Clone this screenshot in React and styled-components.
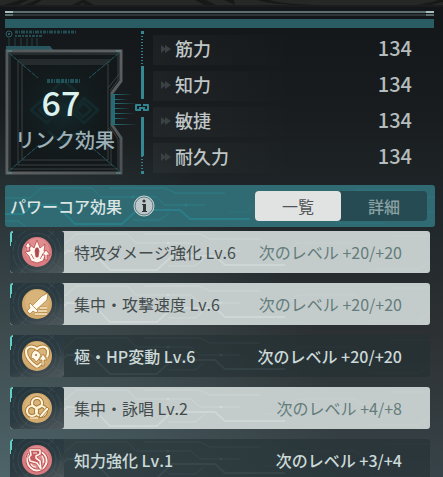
import { useState } from "react";
import styled, { createGlobalStyle } from "styled-components";

const GlobalStyle = createGlobalStyle`
  * {
    box-sizing: border-box;
  }

  body {
    margin: 0;
    background-color: #15181a;
    font-family: "Noto Sans CJK JP", "Noto Sans", sans-serif;
    font-kerning: none;
  }

  button {
    font-family: inherit;
    border: none;
    padding: 0;
    cursor: pointer;
  }
`;

const Page = styled.main`
  min-height: 100vh;
  overflow: hidden;
  background:
    radial-gradient(ellipse at 0% 100%, rgba(92, 122, 126, 0.6), transparent 55%),
    linear-gradient(to bottom, #131618 0%, #191d1f 25%, #20272a 45%, #2d3133 70%, #38444a 100%);
`;

const TopStrip = styled.div`
  height: 7px;
  background-color: #262727;
  border-bottom: 2px solid #1c1c1c;
  overflow: hidden;

  svg {
    display: block;
  }
`;

const Panel = styled.section`
  padding: 4px 8px 0 5px;
`;

const Rule = styled.div`
  height: 2px;
  margin-right: 1px;
  margin-bottom: ${(props) => (props.$dim ? "3px" : "1px")};
  background-color: ${(props) => (props.$dim ? "#2c3435" : "#5c6e6e")};
  border: solid ${(props) => (props.$dim ? "#5c6e6e" : "#a9c0bf")};
  border-width: 0 8px;
`;

const TealBar = styled.div`
  height: 9px;
  margin-right: 1px;
  background-color: #2a5c63;
`;

const Overview = styled.div`
  display: flex;
  align-items: flex-start;
  height: 157px;
`;

const LinkCore = styled.div`
  position: relative;
  width: 148px;
  height: 147px;
  flex-shrink: 0;
`;

const CoreArt = styled.svg`
  position: absolute;
  inset: 0;
`;

const CoreText = styled.div`
  position: relative;
  width: 120px;
  padding-top: 50px;
  text-align: center;
`;

const CoreLevel = styled.div`
  font-size: 34px;
  line-height: 48px;
  font-weight: 500;
  padding-right: 8px;
  color: #dcf2ee;
`;

const CoreLabel = styled.div`
  font-size: 20px;
  line-height: 28px;
  font-weight: 500;
  white-space: nowrap;
  color: #9cb0b8;
`;

const Stats = styled.dl`
  flex: 1;
  display: flex;
  flex-direction: column;
  gap: 6px;
  margin: 0;
  padding-top: 7px;
`;

const Stat = styled.div`
  display: flex;
  align-items: center;
  height: 30px;
  padding: 0 23px 4px 8px;
  background: linear-gradient(to right, rgba(255, 255, 255, 0.035), transparent 50%);

  svg {
    margin: 2px 4px 0 0;
  }
`;

const StatName = styled.dt`
  flex: 1;
  font-size: 18px;
  line-height: 26px;
  font-weight: 500;
  color: #bfc6c7;
`;

const StatValue = styled.dd`
  margin: 0;
  font-size: 20px;
  line-height: 26px;
  font-weight: 500;
  color: #b5bcbd;
`;

const Header = styled.header`
  position: relative;
  display: flex;
  align-items: center;
  height: 42px;
  padding: 0 8px 0 5px;
  border-radius: 3px;
  background-color: #306b74;
  overflow: hidden;
`;

const Circuit = styled.svg`
  position: absolute;
  top: 0;
  left: ${(props) => props.$left || "0"};
  height: 42px;
  width: 430px;
  fill: none;
  stroke: ${(props) => props.$color};
  pointer-events: none;
`;

const HeaderTitle = styled.h2`
  position: relative;
  margin: 0;
  font-size: 16px;
  line-height: 24px;
  font-weight: 500;
  color: #dbe6e4;
`;

const InfoButton = styled.button`
  position: relative;
  width: 22px;
  height: 22px;
  margin-left: 11px;
  background: none;

  svg {
    display: block;
  }
`;

const Toggle = styled.div`
  position: relative;
  display: flex;
  width: 172px;
  height: 30px;
  margin-left: auto;
  border-radius: 4px;
  background-color: #264b52;
`;

const ToggleButton = styled.button`
  flex: 1;
  border-radius: 4px;
  font-size: 16px;
  line-height: 24px;
  font-weight: ${(props) => (props.$active ? 400 : 500)};
  color: ${(props) => (props.$active ? "#505456" : "#8ba1a4")};
  background-color: ${(props) => (props.$active ? "#e1e3e3" : "transparent")};
`;

const EffectList = styled.ul`
  display: flex;
  flex-direction: column;
  gap: 10px;
  margin: 0;
  padding: 4px 5px 0;
  list-style: none;
`;

const Effect = styled.li`
  position: relative;
  display: flex;
  align-items: center;
  height: 42px;
  padding-right: 28px;
  border-radius: 3px;
  overflow: hidden;
  font-size: 16px;
  line-height: 24px;
  white-space: nowrap;
  font-weight: ${(props) => (props.$active ? 500 : 400)};
  background-color: ${(props) => (props.$active ? "rgba(35, 48, 52, 0.62)" : "#c3cccb")};
`;

const EffectIcon = styled.div`
  position: relative;
  width: 54px;
  height: 42px;
  flex-shrink: 0;
  border-radius: 3px;
  overflow: hidden;
  background: linear-gradient(155deg, #26363d 0%, #2d3c42 55%, #50595c 100%);

  svg {
    display: block;
  }
`;

const EffectName = styled.span`
  position: relative;
  flex: 1;
  margin-left: 10px;
  color: ${(props) => (props.$active ? "#cbd9d8" : "#444b4d")};
`;

const EffectNext = styled.span`
  position: relative;
  color: ${(props) => (props.$active ? "#cbd9d8" : "#647c7b")};
`;

const stats = [
  { name: "筋力", value: 134 },
  { name: "知力", value: 134 },
  { name: "敏捷", value: 134 },
  { name: "耐久力", value: 134 },
];

const effects = [
  { name: "特攻ダメージ強化 Lv.6", next: "+20/+20", icon: "burst", active: false },
  { name: "集中・攻撃速度 Lv.6", next: "+20/+20", icon: "sword", active: false },
  { name: "極・HP変動 Lv.6", next: "+20/+20", icon: "heart", active: true },
  { name: "集中・詠唱 Lv.2", next: "+4/+8", icon: "rings", active: false },
  { name: "知力強化 Lv.1", next: "+3/+4", icon: "mind", active: true },
];

const glyphs = {
  burst: (
    <g fill="#fff8ee" stroke="#b9484e" strokeWidth="0.8">
      <path d="M15 3 L18 11 L23 7 L22 14 L25 15 L23 19 L21 24 L15 26 L9 24 L7 19 L3 15 L8 14 L7 7 L12 11Z" />
      <path d="M6 5 L9 10 L7 10 L7 14 L5 14 L5 10 L3 10Z" />
      <path d="M24 13 L28 18 L25 18 L25 23 L23 23 L23 18 L20 18Z" />
      <path d="M14 11 L16 11 L17 14 L16 20 L14 20 L13 14Z" fill="#a94850" />
      <path d="M9 17 L12 22 M21 17 L18 22" fill="none" />
    </g>
  ),
  sword: (
    <g stroke="#a8752f" strokeWidth="0.7" fill="#fffaf0">
      <path d="M26 4 L25 11 L14 21 L10 17 L20 7Z" />
      <path d="M8 14 L16 22 L14 24 L11 22 L8 25 L5 22 L8 19 L7 16Z" />
      <path d="M18 19H25 M16 22H25 M13 25H25" stroke="#a8752f" strokeWidth="2.4" />
      <path d="M18 19H25 M16 22H25 M13 25H25" stroke="#fff4d5" strokeWidth="1.3" />
    </g>
  ),
  heart: (
    <g fill="none" stroke="#fff4dc" strokeWidth="2.2">
      <path d="M15 26 C8 21 4 16 4 11 C4 5 11 4 15 8 C19 4 26 5 26 11 C26 13 26 14 25 16 M15 26 L20 22" stroke="#b07c38" strokeWidth="4" />
      <path d="M15 26 C8 21 4 16 4 11 C4 5 11 4 15 8 C19 4 26 5 26 11 C26 13 26 14 25 16 M15 26 L20 22" />
      <path d="M10 12 L13 9 L17 11 L19 14 L17 18 L14 21 L12 18 L9 17Z" fill="#fff7e7" stroke="#ad7838" strokeWidth="0.8" />
      <path d="M13 13 L15 15 M15 13 L13 15" stroke="#ad7838" strokeWidth="0.8" />
      <path d="M21 13 L25 19 L22 19 L22 25 L20 25 L20 19 L17 19Z" fill="#fff7e7" stroke="#a8732f" strokeWidth="0.8" />
    </g>
  ),
  rings: (
    <g fill="none">
      <g stroke="#a57735" strokeWidth="4">
        <circle cx="15" cy="10" r="5" />
        <circle cx="10" cy="18" r="5" />
        <circle cx="19" cy="18" r="5" />
      </g>
      <g stroke="#fff3d8" strokeWidth="2.2">
        <circle cx="15" cy="10" r="5" />
        <circle cx="10" cy="18" r="5" />
        <circle cx="19" cy="18" r="5" />
      </g>
      <path d="M25 14 L27 16 L20 24 L17 25 L18 22Z" fill="#fff7e6" stroke="#a57735" strokeWidth="0.9" />
      <path d="M8 25 H16" stroke="#fff3d8" strokeWidth="1.2" />
    </g>
  ),
  mind: (
    <g fill="none" strokeLinejoin="round">
      <path d="M7 9 C4 14 5 20 9 23 C13 27 20 26 23 21 C26 17 25 10 19 7" stroke="#bb4d52" strokeWidth="3.6" />
      <path d="M7 9 C4 14 5 20 9 23 C13 27 20 26 23 21 C26 17 25 10 19 7" stroke="#fff0e8" strokeWidth="1.8" />
      <path d="M8 5 L18 5 L18 9 L14 11 L14 13 L18 16 L19 24 L15 18 L8 16 L7 12 L9 10Z" fill="#c65a5e" stroke="#b24549" strokeWidth="3" />
      <path d="M8 5 L18 5 L18 9 L14 11 L14 13 L18 16 L19 24 L15 18 L8 16 L7 12 L9 10Z" fill="#c65a5e" stroke="#fff4ec" strokeWidth="1.6" />
      <path d="M11 8 H15 M20 11 C22 14 22 16 21 18 M9 19 C10 21 12 22 14 22" stroke="#fff0e8" strokeWidth="1.2" />
    </g>
  ),
};

const redIcons = ["burst", "mind"];

const EffectArt = ({ name }) => {
  const red = redIcons.includes(name);
  return (
    <svg width="54" height="42" viewBox="0 0 54 42" aria-hidden="true">
      <g fill="none" stroke="#6f8588" strokeOpacity="0.2">
        <circle cx="27" cy="21" r="19" />
        <circle cx="27" cy="21" r="24" strokeDasharray="12 3" />
        <path d="M10 42 L18 34 M38 6 L44 0 M42 31 L54 39" />
      </g>
      <path d="M0 0H3V2H2V11H1V15H0Z" fill="#62cfc5" />
      <circle cx="27" cy="21" r="15" fill={red ? "#d97c80" : "#d2aa6d"} />
      <circle cx="27" cy="19" r="12" fill={red ? "#e39a99" : "#dcba83"} fillOpacity="0.6" />
      <g transform="translate(12 6)">{glyphs[name]}</g>
    </svg>
  );
};

const CircuitLines = ({ color, left }) => (
  <Circuit $color={color} $left={left} viewBox="0 0 430 42" aria-hidden="true">
    <path d="M0 13H25L36 3H87L96 12H151L160 20H200" />
    <path d="M0 29H18L27 20H51L70 39H117L132 25H175L185 34H245" strokeWidth="2" />
    <path d="M0 36H13L20 41 M104 3H160L170 8H220 M128 35H155L164 28" />
    <path d="M225 27H242L257 12H315L328 22H360 M330 38H379L392 27H430 M350 5H410L420 12H430" strokeOpacity="0.5" />
    <circle cx="128" cy="12" r="1" />
    <circle cx="181" cy="20" r="1" />
  </Circuit>
);

const CoreDrawing = () => (
  <CoreArt width="148" height="147" viewBox="5 28 148 147" aria-hidden="true">
    <defs>
      <linearGradient id="frame" x1="0" y1="0" x2="1" y2="1">
        <stop offset="0" stopColor="#535a5c" />
        <stop offset="0.5" stopColor="#5e6061" />
        <stop offset="1" stopColor="#4b5253" />
      </linearGradient>
      <radialGradient id="coreGlow">
        <stop offset="0" stopColor="#164045" stopOpacity="0.4" />
        <stop offset="1" stopColor="#111719" stopOpacity="0" />
      </radialGradient>
      <linearGradient id="beam">
        <stop offset="0" stopColor="#25757d" />
        <stop offset="1" stopColor="#25757d" stopOpacity="0" />
      </linearGradient>
    </defs>
    <circle cx="9" cy="34" r="3" fill="none" stroke="#2c6168" />
    <circle cx="9" cy="34" r="1" fill="#347078" />
    <path d="M15 32H76" stroke="#28626a" strokeWidth="3" strokeDasharray="3 1 1 1 4 1 2 1" strokeOpacity="0.7" />
    <path d="M15 36H43" stroke="#234b50" strokeWidth="2" strokeDasharray="2 1 3 1" />
    <path d="M9 38V46M15 38V46M21 38V46M27 38V46M32 38V46M37 38V46" stroke="#234249" />
    <path d="M6 46H50L54 51H6Z" fill="#28575f" />
    <path d="M7 51H121V81L112 93V125L121 138V173H7Z" fill="#13191b" stroke="url(#frame)" strokeWidth="3" />
    <path d="M7 51H112L108 64V160L117 171H7Z" fill="url(#coreGlow)" />
    <g fill="none" stroke="#3a4143">
      <path d="M10 54H118V80L110 91 M10 54V169H118V139L110 127" />
      <path d="M18 60H111M18 60V165H112M22 64H108V160H22Z" />
      <path d="M20 62H110M108 88L120 73M108 128L111 131V165" />
    </g>
    <g fill="none" stroke="#14292b" strokeWidth="3" strokeLinejoin="round">
      <path d="M31 110L45 98L57 109L68 118L84 98L98 110L84 123L64 105L47 123Z" />
      <path d="M39 110L46 104L55 111L47 117Z M75 110L84 103L91 110L83 117Z" />
      <path d="M49 94L63 80L79 94 M48 131L63 143L80 131" />
    </g>
    <path d="M9 53L38 78M119 53L89 78M9 171L39 145M119 171L89 145" stroke="#215a61" strokeDasharray="5 1" />
    <path d="M7 51H12M116 51H121M7 173H12M116 173H121" stroke="#609296" />
    <path d="M47 81H80" stroke="#245f66" strokeWidth="4" strokeDasharray="3 1 2 1 1 1 4 1" strokeOpacity="0.8" />
    <rect x="111" y="94" width="4" height="31" fill="#276a73" />
    <g fill="url(#beam)">
      <rect x="114" y="94" width="19" height="1" />
      <rect x="114" y="99" width="14" height="1" />
      <rect x="114" y="103" width="24" height="1" />
      <rect x="114" y="108" width="16" height="1" />
      <rect x="114" y="113" width="21" height="1" />
      <rect x="114" y="118" width="15" height="1" />
      <rect x="114" y="124" width="24" height="1" />
    </g>
    <g fill="#358791">
      <rect x="141" y="31" width="3" height="3" />
      <rect x="141" y="66" width="3" height="33" />
      <rect x="141" y="117" width="3" height="39" />
      <rect x="141" y="171" width="3" height="3" />
    </g>
    <path d="M142 36V66M142 156V171" stroke="#2d7f8b" strokeWidth="2" strokeDasharray="1 2" />
    <path d="M141 105H136V110H141M143 105H148V110H143M139 108H145" fill="none" stroke="#328490" strokeWidth="2" strokeLinejoin="round" />
  </CoreArt>
);

const App = () => {
  const [view, setView] = useState("list");

  return (
    <>
      <GlobalStyle />
      <Page>
        <TopStrip>
          <svg width="100%" height="5" fill="#171919" aria-hidden="true">
            <path d="M4 5L20 0H28L18 5Z M24 5L37 0H42L34 5Z M72 5L82 0H85L94 5H85L82 3L80 5Z M195 0H206L216 5H204Z M224 0H234L235 5Z M257 0C270 4 282 4 294 5H314C292 4 280 3 269 0Z M415 4C424 4 433 2 438 0H443V2L430 5Z" />
          </svg>
        </TopStrip>
        <Panel>
          <Rule />
          <Rule $dim />
          <TealBar />
          <Overview>
            <LinkCore>
              <CoreDrawing />
              <CoreText>
                <CoreLevel>67</CoreLevel>
                <CoreLabel>リンク効果</CoreLabel>
              </CoreText>
            </LinkCore>
            <Stats>
              {stats.map((stat) => (
                <Stat key={stat.name}>
                  <svg width="10" height="8" fill="#3b4143" aria-hidden="true">
                    <path d="M0 0L5 4L0 8Z M4 0L10 4L4 8Z" />
                  </svg>
                  <StatName>{stat.name}</StatName>
                  <StatValue>{stat.value}</StatValue>
                </Stat>
              ))}
            </Stats>
          </Overview>
          <Header>
            <CircuitLines color="rgba(38, 143, 153, 0.5)" />
            <HeaderTitle>パワーコア効果</HeaderTitle>
            <InfoButton type="button" aria-label="情報">
              <svg width="22" height="22" aria-hidden="true">
                <circle cx="11" cy="11" r="10" fill="#bdc8ca" stroke="#c7d7d8" />
                <circle cx="11" cy="11" r="9" fill="none" stroke="#62797e" />
                <circle cx="11" cy="6" r="1.6" fill="#303638" />
                <path d="M9 9H13V16H14V17H9V16H10V10H9Z" fill="#303638" />
              </svg>
            </InfoButton>
            <Toggle>
              <ToggleButton
                type="button"
                $active={view === "list"}
                aria-pressed={view === "list"}
                onClick={() => setView("list")}
              >
                一覧
              </ToggleButton>
              <ToggleButton
                type="button"
                $active={view === "detail"}
                aria-pressed={view === "detail"}
                onClick={() => setView("detail")}
              >
                詳細
              </ToggleButton>
            </Toggle>
          </Header>
          <EffectList>
            {effects.map((effect) => (
              <Effect key={effect.name} $active={effect.active}>
                <CircuitLines
                  color={effect.active ? "rgba(120, 150, 155, 0.12)" : "rgba(225, 235, 233, 0.35)"}
                  left="30px"
                />
                <EffectIcon>
                  <EffectArt name={effect.icon} />
                </EffectIcon>
                <EffectName $active={effect.active}>{effect.name}</EffectName>
                <EffectNext $active={effect.active}>次のレベル {effect.next}</EffectNext>
              </Effect>
            ))}
          </EffectList>
        </Panel>
      </Page>
    </>
  );
};

export default App;
